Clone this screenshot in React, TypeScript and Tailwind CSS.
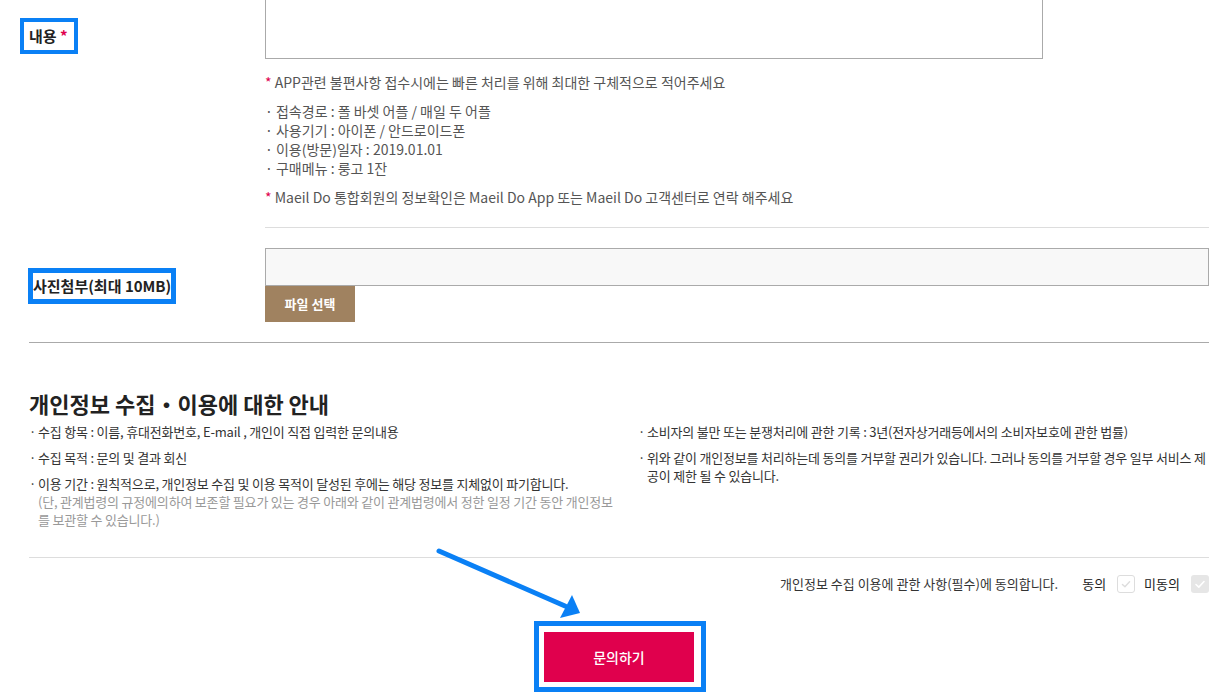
import React from 'react';

const Check = ({ color }: { color: string }) => (
  <svg viewBox="0 0 18 18" className="h-[18px] w-[18px]">
    <path d="M5 9.5l2.8 2.6L13 6.5" fill="none" stroke={color} strokeWidth="1.6" strokeLinecap="round" strokeLinejoin="round" />
  </svg>
);

const App: React.FC = () => {
  return (
    <div className="relative min-h-screen overflow-hidden bg-white font-['Noto_Sans_CJK_KR',sans-serif] text-[#555]">
      <div className="ml-[29px] w-[1180px]">
        {/* 내용 row */}
        <div className="flex">
          <div className="w-[236px] pt-[23px]">
            <span className="relative inline-block text-[15px] leading-[20px] font-bold text-[#222]">
              내용 <span className="text-[#e0004d]">*</span>
              <span className="absolute left-[-9px] right-[-10px] top-[-8px] bottom-[-8px] border-4 border-[#0a80f5]" />
            </span>
          </div>
          <div className="flex-1">
            <div className="h-[59px] w-[778px] border border-t-0 border-[#aaa]" />
            <p className="mt-[14px] text-[14px] leading-[19px]">
              <span className="text-[#e0004d]">*</span> APP관련 불편사항 접수시에는 빠른 처리를 위해 최대한 구체적으로 적어주세요
            </p>
            <ul className="mt-[10px] text-[14px] leading-[19px]">
              <li>· 접속경로 : 폴 바셋 어플 / 매일 두 어플</li>
              <li>· 사용기기 : 아이폰 / 안드로이드폰</li>
              <li>· 이용(방문)일자 : 2019.01.01</li>
              <li>· 구매메뉴 : 룽고 1잔</li>
            </ul>
            <p className="mt-[10px] text-[14px] leading-[19px]">
              <span className="text-[#e0004d]">*</span> Maeil Do 통합회원의 정보확인은 Maeil Do App 또는 Maeil Do 고객센터로 연락 해주세요
            </p>
            <div className="mt-[20px] border-t border-[#ddd]" />
          </div>
        </div>

        {/* 사진첨부 row */}
        <div className="flex items-center py-[20px]">
          <div className="w-[236px]">
            <span className="relative ml-[4px] inline-block text-[15px] leading-[20px] font-bold text-[#222]">
              사진첨부(최대 10MB)
              <span className="absolute left-[-5px] right-[-5px] top-[-8px] bottom-[-8px] border-[5px] border-[#0a80f5]" />
            </span>
          </div>
          <div className="flex-1">
            <div className="h-[38px] border border-[#aaa] bg-[#f8f8f8]" />
            <button className="flex h-[36px] w-[90px] items-center justify-center bg-[#a08260] text-[13px] font-bold text-white">
              파일 선택
            </button>
          </div>
        </div>

        <div className="border-t border-[#aaa]" />

        {/* 개인정보 안내 */}
        <h2 className="mt-[45px] text-[22px] leading-[30px] font-bold text-[#222]">개인정보 수집・이용에 대한 안내</h2>
        <div className="mt-[5px] grid grid-cols-[591px_1fr] gap-x-[18px] text-[13px] leading-[18px] tracking-[-0.2px] text-[#333]">
          <ul className="space-y-[8px]">
            <li className="flex">
              <span className="w-[9px] shrink-0">·</span>
              <span>수집 항목 : 이름, 휴대전화번호, E-mail , 개인이 직접 입력한 문의내용</span>
            </li>
            <li className="flex">
              <span className="w-[9px] shrink-0">·</span>
              <span>수집 목적 : 문의 및 결과 회신</span>
            </li>
            <li className="flex">
              <span className="w-[9px] shrink-0">·</span>
              <span>
                이용 기간 : 원칙적으로, 개인정보 수집 및 이용 목적이 달성된 후에는 해당 정보를 지체없이 파기합니다.
                <span className="block text-[#999]">
                  (단, 관계법령의 규정에의하여 보존할 필요가 있는 경우 아래와 같이 관계법령에서 정한 일정 기간 동안 개인정보를 보관할 수 있습니다.)
                </span>
              </span>
            </li>
          </ul>
          <ul className="space-y-[8px]">
            <li className="flex">
              <span className="w-[9px] shrink-0">·</span>
              <span>소비자의 불만 또는 분쟁처리에 관한 기록 : 3년(전자상거래등에서의 소비자보호에 관한 법률)</span>
            </li>
            <li className="flex">
              <span className="w-[9px] shrink-0">·</span>
              <span>위와 같이 개인정보를 처리하는데 동의를 거부할 권리가 있습니다. 그러나 동의를 거부할 경우 일부 서비스 제공이 제한 될 수 있습니다.</span>
            </li>
          </ul>
        </div>

        <div className="mt-[28px] border-t border-[#ddd]" />

        {/* 동의 */}
        <div className="flex items-center justify-end pt-[17px] text-[#333]">
          <span className="text-[13px] leading-[18px]">개인정보 수집 이용에 관한 사항(필수)에 동의합니다.</span>
          <span className="ml-[24px] text-[13px] leading-[18px] text-[#222]">동의</span>
          <span className="ml-[11px] flex h-[18px] w-[18px] items-center justify-center rounded-[3px] border border-[#ddd]">
            <Check color="#ddd" />
          </span>
          <span className="ml-[9px] text-[13px] leading-[18px] text-[#222]">미동의</span>
          <span className="ml-[11px] flex h-[18px] w-[18px] items-center justify-center rounded-[3px] bg-[#e6e6e6]">
            <Check color="#fff" />
          </span>
        </div>

        <div className="mt-[39px] flex justify-center">
          <div className="relative">
            <button className="h-[50px] w-[150px] bg-[#e0004d] text-[14px] font-medium text-white">문의하기</button>
            <span className="absolute left-[-10px] right-[-12px] top-[-11px] bottom-[-10px] border-[5px] border-[#0a80f5]" />
          </div>
        </div>
      </div>

      {/* annotation arrow */}
      <svg className="pointer-events-none absolute left-0 top-0" width="1232" height="695">
        <line x1="439" y1="551" x2="565" y2="606" stroke="#0a80f5" strokeWidth="5" strokeLinecap="round" />
        <polygon points="580,613 560,618 572,595" fill="#0a80f5" />
      </svg>
    </div>
  );
};

export default App;
